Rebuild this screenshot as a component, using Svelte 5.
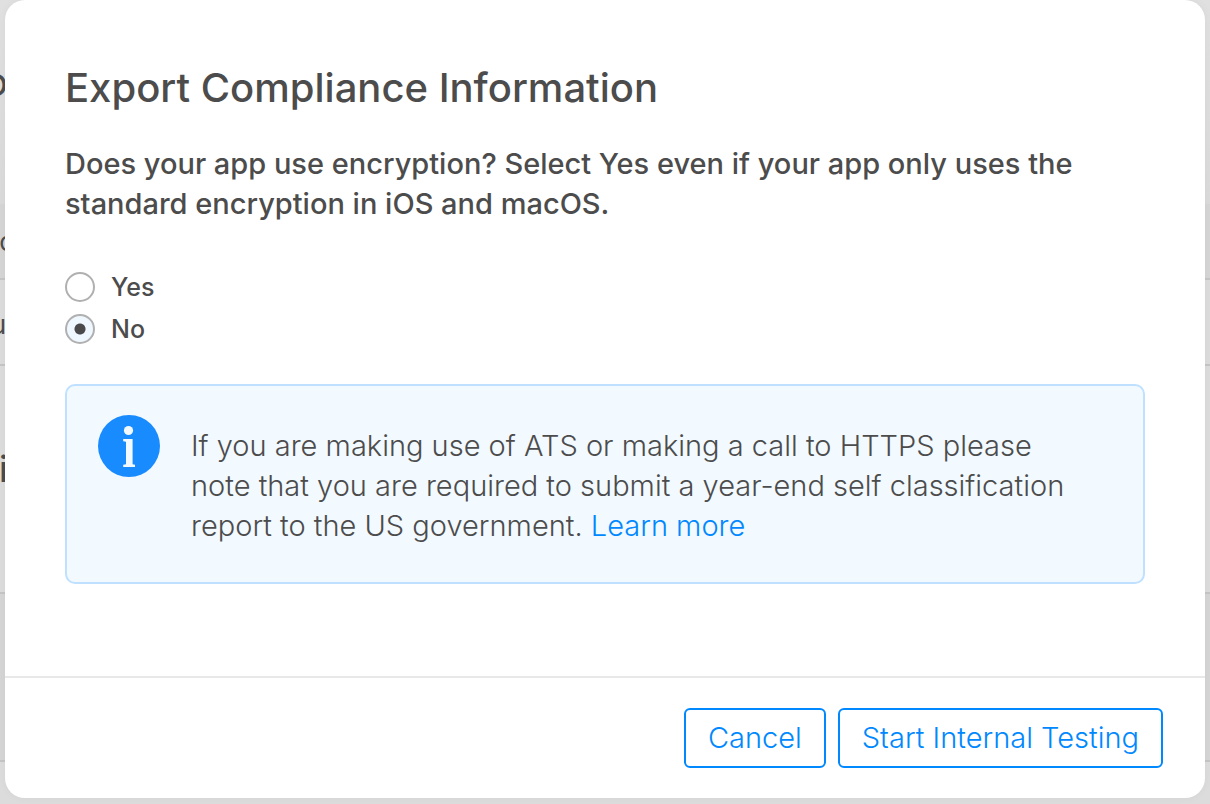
<script>
  let encryption = $state('no');
</script>

<div class="screen">
  <div class="page" aria-hidden="true">
    <div class="band title"><span>o</span></div>
    <div class="band head"><span>c</span></div>
    <div class="band row"><span>u</span></div>
    <div class="band section"><span>i</span></div>
    <div class="band shaded"></div>
    <div class="band rest"></div>
  </div>

  <div class="dialog" role="dialog" aria-modal="true" aria-labelledby="dialog-title">
    <div class="content">
      <h1 id="dialog-title">Export Compliance Information</h1>
      <fieldset>
        <legend>Does your app use encryption? Select Yes even if your app only uses the standard encryption in iOS and macOS.</legend>
        <label><input type="radio" name="encryption" value="yes" bind:group={encryption} />Yes</label>
        <label><input type="radio" name="encryption" value="no" bind:group={encryption} />No</label>
      </fieldset>
      <div class="note">
        <svg viewBox="0 0 62 62" width="62" height="62" aria-hidden="true">
          <circle cx="31" cy="31" r="31" fill="#188bff" />
          <circle cx="30.500" cy="15.500" r="4.600" fill="#f2f9ff" />
          <path d="M25.200 24H34.600V49.200L37 49.800V52H25.200V49.800L28 49.200V26.800L25.200 26.200Z" fill="#f2f9ff" />
        </svg>
        <p>If you are making use of ATS or making a call to HTTPS please note that you are required to submit a year-end self classification report to the US government. <a href="#learn-more">Learn more</a></p>
      </div>
    </div>
    <footer>
      <button type="button">Cancel</button>
      <button type="button">Start Internal Testing</button>
    </footer>
  </div>
</div>

<style>
  :global(body) {
    margin: 0;
    background: #dedede;
  }
  .screen {
    display: grid;
    min-height: 100vh;
    overflow: hidden;
    font-family: Inter, "Liberation Sans", sans-serif;
    color: #4c4c4c;
    background: #dcdcdc;
  }
  .page,
  .dialog {
    grid-area: 1 / 1;
  }
  .page {
    display: grid;
    grid-template-rows: 204px 76px 86px 228px 168px 1fr;
  }
  .band {
    box-sizing: border-box;
    display: flex;
    align-items: center;
    border-bottom: 2px solid #c5c5c5;
    font-size: 26px;
  }
  .band span {
    display: flex;
    justify-content: flex-end;
    width: 8px;
  }
  .title {
    align-items: flex-start;
    padding-top: 58px;
    border-bottom: 0;
    font-size: 40px;
    line-height: 48px;
    background: linear-gradient(#e0e0e0, #dadada);
  }
  .head,
  .shaded {
    background: #d5d5d5;
  }
  .head span {
    width: 14px;
  }
  .row {
    padding-top: 4px;
  }
  .row span {
    width: 6px;
  }
  .section {
    font-size: 36px;
    font-weight: 500;
    padding-bottom: 20px;
  }
  .rest {
    border-bottom: 0;
  }
  .dialog {
    display: flex;
    flex-direction: column;
    margin: 0 5px 6px;
    border-radius: 20px;
    background: #fff;
    box-shadow: 0 0 8px rgba(0, 0, 0, 0.04);
  }
  .content {
    flex: 1;
    padding: 64px 60px 0;
  }
  h1 {
    margin: 0 0 32px;
    font-size: 40px;
    line-height: 48px;
    font-weight: 500;
  }
  fieldset {
    min-width: 0;
    margin: 0;
    padding: 0;
    border: 0;
  }
  legend {
    margin-bottom: 42px;
    padding: 0;
    font-size: 29px;
    line-height: 40px;
    font-weight: 500;
  }
  label {
    display: flex;
    align-items: center;
    gap: 16px;
    width: fit-content;
    height: 42px;
    font-size: 25px;
    font-weight: 500;
  }
  input {
    appearance: none;
    box-sizing: border-box;
    width: 30px;
    height: 30px;
    margin: 0;
    border: 2px solid #b0b0b0;
    border-radius: 50%;
    background: #fff;
  }
  input:checked {
    background: radial-gradient(circle, #4a4a4a 5px, #f0f8ff 6px);
  }
  .note {
    display: flex;
    align-items: flex-start;
    gap: 31px;
    margin-top: 34px;
    padding: 29px 56px 36px 31px;
    border: 2px solid #bfe1ff;
    border-radius: 10px;
    background: #f2f9ff;
  }
  .note svg {
    flex: none;
  }
  .note p {
    margin: 11px 0 0;
    font-size: 29px;
    line-height: 40px;
    font-weight: 300;
  }
  a {
    color: #0088ff;
    text-decoration: none;
  }
  footer {
    display: flex;
    justify-content: flex-end;
    gap: 12px;
    padding: 30px 42px;
    border-top: 2px solid #e8e8e8;
  }
  button {
    height: 60px;
    padding: 0 22px 2px;
    border: 2px solid #0088ff;
    border-radius: 6px;
    background: #fff;
    color: #0088ff;
    font-family: inherit;
    font-size: 29px;
    font-weight: 300;
  }
</style>
